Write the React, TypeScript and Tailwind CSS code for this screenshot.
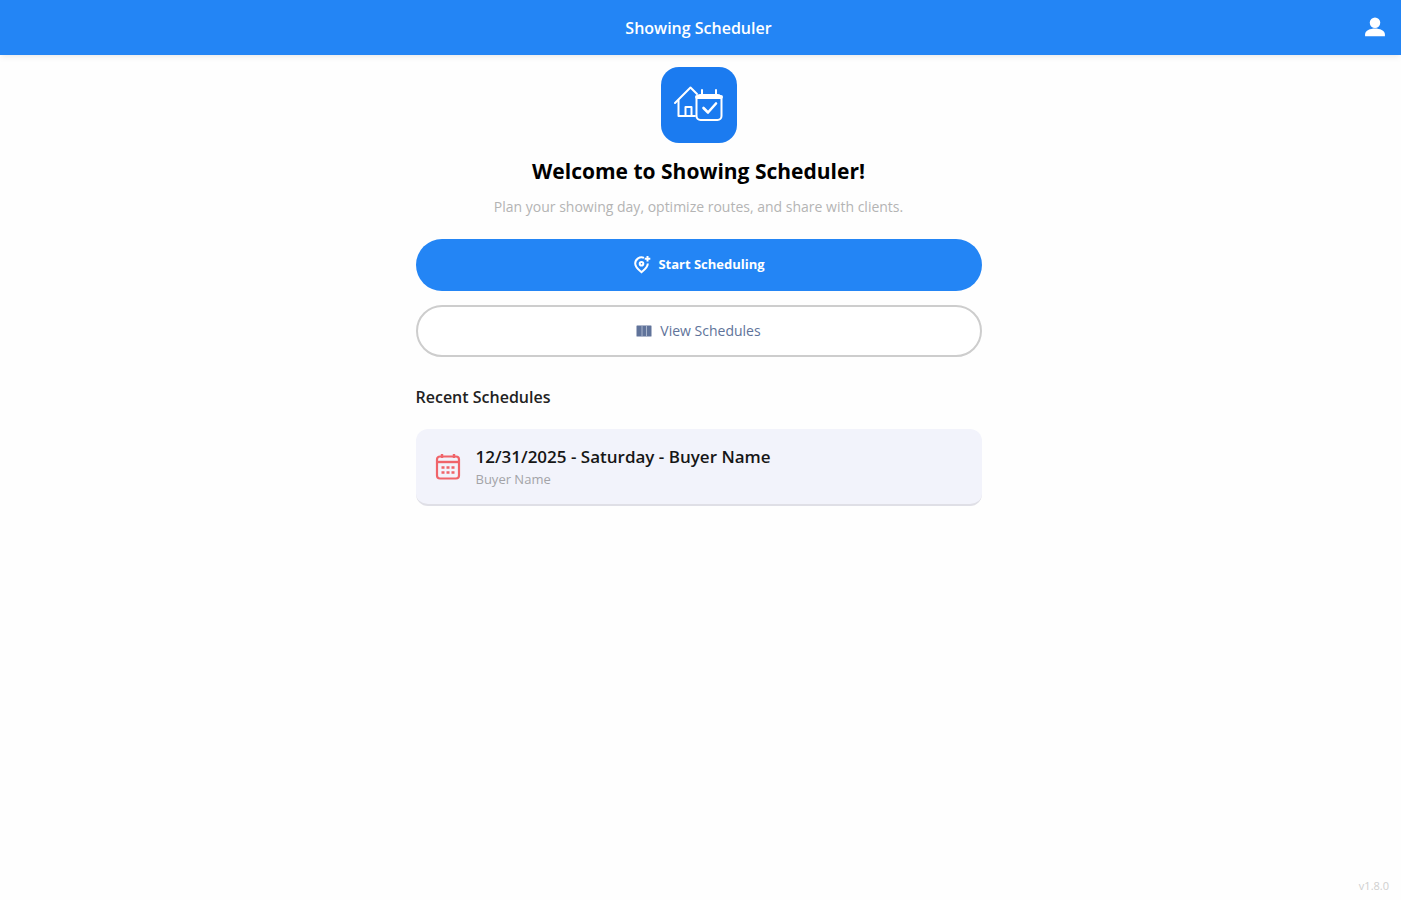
import type { ReactNode } from "react";

type Schedule = {
  id: number;
  title: string;
  client: string;
};

const recentSchedules: Schedule[] = [
  { id: 1, title: "12/31/2025 - Saturday - Buyer Name", client: "Buyer Name" },
];

const PersonIcon = () => (
  <svg className="size-7" viewBox="0 0 24 24" fill="currentColor" aria-hidden="true">
    <circle cx="12" cy="7.500" r="4.500" />
    <path d="M12 12.500c-4 0-8.500 1.800-8.500 5V19h17v-1.500c0-3.200-4.500-5-8.500-5z" />
  </svg>
);

const PinPlusIcon = () => (
  <svg className="size-5" viewBox="0 0 20 20" fill="none" stroke="currentColor" strokeWidth="2" aria-hidden="true">
    <path d="M12 2.800A6.300 6.300 0 0 0 3.200 8.600c0 4 4 6.600 6.300 8.600 2.300-2 6.300-4.600 6.300-8.600" />
    <path d="M15.500 1v5.600M12.700 3.800h5.600" />
    <circle cx="9.500" cy="8.800" r="1.800" />
  </svg>
);

const ColumnsIcon = () => (
  <svg className="h-3 w-4" viewBox="0 0 16 12" aria-hidden="true">
    <rect x="0.500" y="0.500" width="15" height="11" rx="0.500" fill="#60739a" />
    <path d="M6 1v10M10.500 1v10" stroke="#a9b5cc" strokeWidth="1" />
  </svg>
);

const CalendarIcon = () => (
  <svg className="size-7 shrink-0 text-[#f0646a]" viewBox="0 0 28 28" fill="none" stroke="currentColor" aria-hidden="true">
    <rect x="3" y="3.500" width="22" height="22" rx="3" strokeWidth="2.200" />
    <path d="M3 9h22" strokeWidth="2.400" />
    <path d="M8 1v4M20 1v4" strokeWidth="2.400" />
    <path d="M7.500 14.500h3M12.500 14.500h3M17.500 14.500h3M7.500 19.500h3M12.500 19.500h3M17.500 19.500h3" strokeWidth="2.600" />
  </svg>
);

const Logo = () => (
  <div className="flex size-[76px] items-center justify-center rounded-[18px] bg-[#1b7bf0] text-white">
    <svg className="size-[76px]" viewBox="0 0 76 76" fill="none" stroke="currentColor" strokeWidth="2" strokeLinecap="round" strokeLinejoin="round" role="img" aria-label="House and calendar">
      {/* house */}
      <path d="M14 36 29.500 20.500 36 27" />
      <path d="M17.500 33.500V49H34" />
      <path d="M24.500 49v-9h6v9" />
      {/* calendar */}
      <rect x="35.500" y="28" width="25" height="25" rx="4" />
      <path d="M36 30h24" strokeWidth="4" />
      <path d="M41 23v5M55 23v5" />
      <path d="m42.500 41 4.500 4.500 8-9" strokeWidth="2.600" />
    </svg>
  </div>
);

const PillButton = ({ className, children }: { className: string; children: ReactNode }) => (
  <button
    type="button"
    className={`flex h-13 w-full cursor-pointer items-center justify-center rounded-full ${className}`}
  >
    {children}
  </button>
);

const App = () => {
  return (
    <div className="flex min-h-screen flex-col bg-[#fefefe] font-['Open_Sans','Noto_Sans',sans-serif] text-black">
      <header className="grid h-[55px] grid-cols-[1fr_auto_1fr] items-center bg-[#2385f5] pr-3 pl-2 text-white shadow-md shadow-black/5">
        <h1 className="col-start-2 text-base font-semibold">Showing Scheduler</h1>
        <button type="button" aria-label="Account" className="cursor-pointer justify-self-end">
          <PersonIcon />
        </button>
      </header>

      <main className="mx-auto flex w-full max-w-[570px] grow flex-col items-center pt-3 pr-1">
        <Logo />
        <h2 className="mt-4 text-[21px] leading-6 font-bold">Welcome to Showing Scheduler!</h2>
        <p className="mt-3 text-sm leading-6 text-[#b4b4b4]">
          Plan your showing day, optimize routes, and share with clients.
        </p>

        <div className="mt-5 flex w-full flex-col gap-[14px]">
          <PillButton className="gap-1.5 bg-[#2385f5] text-[13px] font-bold text-white">
            <PinPlusIcon />
            Start Scheduling
          </PillButton>
          <PillButton className="gap-2 border-2 border-[#cdcdcd] bg-white text-sm font-medium text-[#60739a]">
            <ColumnsIcon />
            View Schedules
          </PillButton>
        </div>

        <section className="mt-7 w-full">
          <h3 className="text-base leading-6 font-semibold text-[#222222]">Recent Schedules</h3>
          <ul className="mt-5 flex flex-col gap-3">
            {recentSchedules.map((schedule) => (
              <li key={schedule.id}>
                <a
                  href="#schedule"
                  className="flex h-[77px] items-center gap-[14px] rounded-xl border-b-2 border-[#dfdfe6] bg-[#f2f3fb] px-[18px]"
                >
                  <CalendarIcon />
                  <div>
                    <p className="text-[17px] leading-6 font-semibold text-[#161616]">{schedule.title}</p>
                    <p className="text-[13px] leading-5 text-[#a3a3a8]">{schedule.client}</p>
                  </div>
                </a>
              </li>
            ))}
          </ul>
        </section>
      </main>

      <footer className="px-3 pb-1.5 text-right text-[11px] leading-4 text-[#cfcfcf]">v1.8.0</footer>
    </div>
  );
};

export default App;
